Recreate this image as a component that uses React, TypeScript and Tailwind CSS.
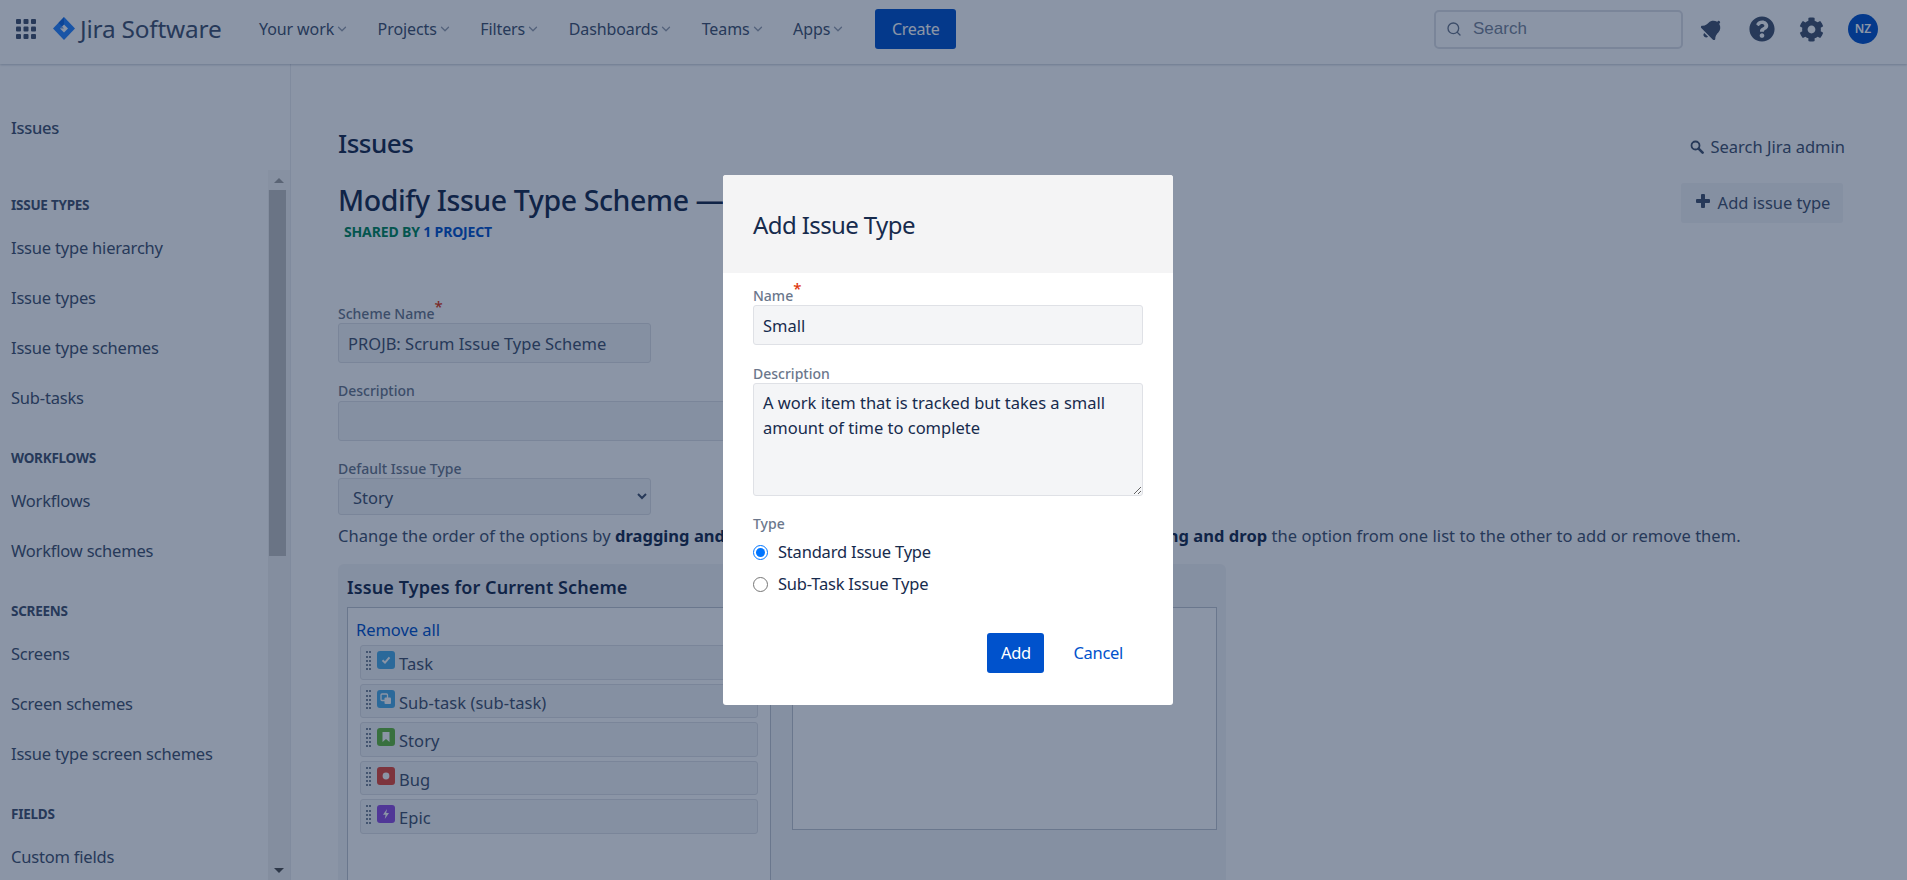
import React from 'react';
import { ChevronDown, Search } from 'lucide-react';
import { FaBell, FaCog, FaQuestionCircle } from 'react-icons/fa';

const navItems = ['Your work', 'Projects', 'Filters', 'Dashboards', 'Teams', 'Apps'];

const sideGroups = [
    { title: 'ISSUE TYPES', items: ['Issue type hierarchy', 'Issue types', 'Issue type schemes', 'Sub-tasks'] },
    { title: 'WORKFLOWS', items: ['Workflows', 'Workflow schemes'] },
    { title: 'SCREENS', items: ['Screens', 'Screen schemes', 'Issue type screen schemes'] },
    { title: 'FIELDS', items: ['Custom fields'] },
];

const GridIcon = () => (
    <svg width="20" height="20" viewBox="0 0 20 20" fill="#42526e">
        <rect x="0" y="0" width="5" height="5" rx="1" />
        <rect x="7.5" y="0" width="5" height="5" rx="1" />
        <rect x="15" y="0" width="5" height="5" rx="1" />
        <rect x="0" y="7.5" width="5" height="5" rx="1" />
        <rect x="7.5" y="7.5" width="5" height="5" rx="1" />
        <rect x="15" y="7.5" width="5" height="5" rx="1" />
        <rect x="0" y="15" width="5" height="5" rx="1" />
        <rect x="7.5" y="15" width="5" height="5" rx="1" />
        <rect x="15" y="15" width="5" height="5" rx="1" />
    </svg>
);

const JiraLogo = () => (
    <svg width="24" height="24" viewBox="0 0 24 24">
        <path d="M12 0 L23 11.5 L12 23 L1 11.5 Z" fill="#2684ff" />
        <path d="M12 7.6 L16 11.5 L12 15.4 L8 11.5 Z" fill="#ffffff" />
        <path d="M12 0 L6.5 5.8 L12 11.5 L8 11.5 L12 7.6 Z" fill="#0052cc" opacity="0.55" />
    </svg>
);

const AdminSearch = () => (
    <svg width="14" height="14" viewBox="0 0 14 14" fill="none" stroke="#42526e">
        <circle cx="5.5" cy="5.5" r="4" strokeWidth="1.8" />
        <path d="M8.6 8.6 L12.6 12.6" strokeWidth="2.6" strokeLinecap="round" />
    </svg>
);

const PlusIcon = () => (
    <svg width="14" height="14" viewBox="0 0 14 14" fill="#42526e">
        <rect x="5" y="0" width="4" height="14" rx="1" />
        <rect x="0" y="5" width="14" height="4" rx="1" />
    </svg>
);

const TypeIcon = ({ kind }: { kind: string }) => {
    const bg: Record<string, string> = {
        task: 'bg-[#4bade8]',
        sub: 'bg-[#4bade8]',
        story: 'bg-[#63ba3c]',
        bug: 'bg-[#e5493a]',
        epic: 'bg-[#904ee2]',
    };
    return (
        <span className={`flex h-[18px] w-[18px] items-center justify-center rounded-[3px] ${bg[kind]}`}>
            <svg width="12" height="12" viewBox="0 0 12 12">
                {kind === 'task' && <path d="M2.5 6.2 L5 8.6 L9.5 3.4" fill="none" stroke="#fff" strokeWidth="2" />}
                {kind === 'sub' && (
                    <>
                        <rect x="1" y="1" width="6.5" height="6.5" rx="1" fill="none" stroke="#fff" strokeWidth="1.3" />
                        <rect x="4.5" y="4.5" width="6.5" height="6.5" rx="1" fill="#fff" />
                    </>
                )}
                {kind === 'story' && <path d="M2.5 1 H9.5 V11 L6 8 L2.5 11 Z" fill="#fff" />}
                {kind === 'bug' && <circle cx="6" cy="6" r="3.4" fill="#fff" />}
                {kind === 'epic' && <path d="M7 1 L3 6.8 H5.6 L4.8 11 L9 5 H6.2 Z" fill="#fff" />}
            </svg>
        </span>
    );
};

const issueTypes = [
    { kind: 'task', name: 'Task' },
    { kind: 'sub', name: 'Sub-task (sub-task)' },
    { kind: 'story', name: 'Story' },
    { kind: 'bug', name: 'Bug' },
    { kind: 'epic', name: 'Epic' },
];

const App = () => {
    return (
        <div className="relative h-[880px] w-[1907px] overflow-hidden bg-white text-[16px] text-[#172b4d] font-['Noto_Sans',sans-serif]">
            {/* top bar */}
            <header className="relative flex h-[64px] items-center bg-white pb-[6px] pl-[16px] pr-[29px] shadow-[0_1px_2px_rgba(9,30,66,0.22)]">
                <GridIcon />
                <span className="ml-[16px]"><JiraLogo /></span>
                <span className="ml-[4px] text-[24.4px] tracking-[-0.2px] text-[#42526e]">Jira Software</span>
                <nav className="ml-[9px] flex items-center">
                    {navItems.map((item) => (
                        <span key={item} className="ml-[28.5px] flex items-center text-[16px] tracking-[-0.1px] text-[#42526e]">
                            {item}
                            <ChevronDown size={14} strokeWidth={2.2} className="ml-[1px] text-[#97a0af]" />
                        </span>
                    ))}
                </nav>
                <button className="ml-[30px] h-[40px] w-[81px] rounded-[3px] bg-[#0052cc] text-[16px] tracking-[-0.25px] text-white">Create</button>
                <div className="ml-auto flex items-center">
                    <div className="flex h-[39px] w-[249px] items-center rounded-[5px] border-2 border-[#dfe1e6] bg-white pl-[10px]">
                        <Search size={16} strokeWidth={2} className="text-[#6b778c]" />
                        <span className="ml-[11px] font-['Liberation_Sans',sans-serif] text-[17px] text-[#7a869a]">Search</span>
                    </div>
                    <FaBell size={22} className="ml-[18px] rotate-45 text-[#42526e]" />
                    <FaQuestionCircle size={26} className="ml-[26px] text-[#42526e]" />
                    <FaCog size={25} className="ml-[24px] text-[#42526e]" />
                    <span className="ml-[24px] flex h-[30px] w-[30px] items-center justify-center rounded-full bg-[#0052cc] text-[12px] font-semibold text-white">NZ</span>
                </div>
            </header>

            <div className="flex h-[816px]">
                {/* sidebar */}
                <aside className="flex w-[291px] shrink-0 flex-col border-r border-[#ebecf0]">
                    <div className="mt-[52px] pl-[11px] text-[16.5px] font-medium tracking-[-0.3px] leading-[24px] text-[#42526e]">Issues</div>
                    <div className="mt-[30px] flex min-h-0 flex-1">
                        <div className="w-[268px] overflow-hidden pl-[11px] pt-[25px]">
                            {sideGroups.map((group) => (
                                <div key={group.title} className="mb-[38px]">
                                    <div className="text-[13.5px] font-bold tracking-[-0.25px] leading-[20px] text-[#42526e]">{group.title}</div>
                                    <div className="mt-[20px] flex flex-col gap-[25px]">
                                        {group.items.map((item) => (
                                            <div key={item} className="text-[16.5px] tracking-[-0.2px] leading-[25px] text-[#42526e]">{item}</div>
                                        ))}
                                    </div>
                                </div>
                            ))}
                        </div>
                        <div className="flex w-[22px] flex-col bg-[#f1f1f1]">
                            <div className="flex h-[20px] items-center justify-center bg-[#f7f7f7]">
                                <span className="h-0 w-0 border-x-[5px] border-b-[5px] border-x-transparent border-b-[#a3a3a3]"></span>
                            </div>
                            <div className="ml-[1px] mr-[4px] h-[366px] bg-[#c1c1c1]"></div>
                            <div className="mt-auto flex h-[20px] items-center justify-center">
                                <span className="h-0 w-0 border-x-[5px] border-t-[5px] border-x-transparent border-t-[#505050]"></span>
                            </div>
                        </div>
                    </div>
                </aside>

                {/* main column */}
                <main className="min-w-0 flex-1 pl-[47px] pr-[62px] pt-[63px]">
                    <div className="flex h-[32px] justify-between">
                        <h1 className="text-[26px] font-medium tracking-[-0.5px] leading-[32px]">Issues</h1>
                        <div className="mt-[8px] flex h-[24px] items-center gap-[6px] text-[16.5px] tracking-[0px] text-[#42526e]">
                            <AdminSearch />
                            Search Jira admin
                        </div>
                    </div>
                    <div className="mt-[22px] flex h-[38px] justify-between">
                        <h2 className="whitespace-nowrap text-[28.5px] font-medium tracking-[-0.4px] leading-[38px]">Modify Issue Type Scheme — PROJB: Scrum Issue Type Scheme</h2>
                        <button className="mr-[2px] mt-[2px] flex h-[40px] w-[162px] shrink-0 items-center justify-center gap-[8px] rounded-[3px] bg-[#f4f5f7] pl-[2px] text-[16.5px] tracking-[0px] text-[#42526e]">
                            <span className="-mt-[5px]"><PlusIcon /></span>
                            Add issue type
                        </button>
                    </div>
                    <div className="ml-[6px] mt-[5px] text-[14px] font-bold tracking-[-0.15px] leading-[16px] text-[#00875a]">
                        SHARED BY <span className="text-[#0052cc]">1 PROJECT</span>
                    </div>

                    <label className="mt-[65px] block h-[17px] text-[14px] font-medium leading-[18px] text-[#6b778c]">
                        Scheme Name<sup className="text-[15px] text-[#de350b]">*</sup>
                    </label>
                    <input readOnly value="PROJB: Scrum Issue Type Scheme" className="mt-[1px] block h-[40px] w-[313px] rounded-[3px] border border-[#dfe1e6] bg-[#f4f5f7] px-[9px] text-[16.5px] text-[#42526e]" />

                    <label className="mt-[19px] block h-[18px] text-[14px] font-medium leading-[18px] text-[#6b778c]">Description</label>
                    <div className="mt-[1px] h-[40px] w-[800px] rounded-[3px] border border-[#dfe1e6] bg-[#f4f5f7]"></div>

                    <label className="mt-[19px] block h-[17px] text-[14px] font-medium leading-[18px] text-[#6b778c]">Default Issue Type</label>
                    <select defaultValue="Story" className="mt-[1px] block h-[37px] w-[313px] rounded-[3px] border border-[#dfe1e6] bg-[#f4f5f7] pl-[10px] pr-[8px] pt-[2px] text-[16.5px] text-[#42526e]">
                        <option>Story</option>
                    </select>

                    <p className="mt-[9px] whitespace-nowrap text-[16.5px] tracking-[0.04px] leading-[24px] text-[#42526e]">
                        Change the order of the options by <strong className="text-[#172b4d]">dragging and dropping</strong> the option into desired order. Similarly, <strong className="text-[#172b4d]">dragging and drop</strong> the option from one list to the other to add or remove them.
                    </p>

                    {/* scheme panel */}
                    <div className="mt-[16px] h-[400px] w-[888px] rounded-[6px] bg-[#f4f5f7] px-[9px] pt-[11px]">
                        <div className="text-[18px] font-semibold tracking-[0.1px] leading-[24px]">Issue Types for Current Scheme</div>
                        <div className="mt-[8px] flex items-start gap-[21px]">
                            <div className="h-[300px] w-[424px] border border-[#c1c7d0] bg-white pl-[8px] pr-[12px] pt-[10px]">
                                <div className="text-[16.5px] tracking-[-0.05px] leading-[24px] text-[#0052cc]">Remove all</div>
                                <ul className="ml-[4px] mt-[3px] flex flex-col gap-[4px]">
                                    {issueTypes.map((t) => (
                                        <li key={t.name} className="flex h-[34.5px] items-start rounded-[3px] border border-[#dfe1e6] bg-[#f4f5f7] pl-[5px] pt-[5px]">
                                            <span className="mr-[6px] h-[19px] w-[5px] border-x-2 border-dotted border-[#7a869a]"></span>
                                            <TypeIcon kind={t.kind} />
                                            <span className="ml-[4px] mt-[1px] text-[16.5px] tracking-[0.05px] leading-[24px] text-[#42526e]">{t.name}</span>
                                        </li>
                                    ))}
                                </ul>
                            </div>
                            <div className="h-[223px] w-[425px] border border-[#c1c7d0] bg-white"></div>
                        </div>
                    </div>
                </main>
            </div>

            {/* dim layer and dialog */}
            <div className="absolute inset-0 bg-[#091e42]/[0.47]"></div>
            <div className="absolute left-[723px] top-[175px] h-[530px] w-[450px] overflow-hidden rounded-[3px] bg-white">
                <div className="flex h-[98px] items-center bg-[#f4f4f5] pl-[30px]">
                    <h3 className="mt-[2px] text-[24px] tracking-[-0.6px] text-[#172b4d]">Add Issue Type</h3>
                </div>
                <div className="px-[30px] pt-[14px]">
                    <label className="block h-[17px] text-[14px] font-medium leading-[18px] text-[#6b778c]">
                        Name<sup className="text-[15px] text-[#de350b]">*</sup>
                    </label>
                    <input readOnly value="Small" className="mt-[1px] block h-[40px] w-full rounded-[3px] border border-[#dfe1e6] bg-[#f4f5f7] px-[9px] text-[16.5px] text-[#172b4d]" />
                    <label className="mt-[20px] block h-[18px] text-[14px] font-medium leading-[18px] text-[#6b778c]">Description</label>
                    <textarea readOnly defaultValue="A work item that is tracked but takes a small amount of time to complete" className="block h-[113px] w-full rounded-[3px] border border-[#dfe1e6] bg-[#f4f5f7] px-[9px] py-[6px] text-[16.5px] leading-[25px] text-[#172b4d]"></textarea>
                    <label className="mt-[19px] block h-[18px] text-[14px] font-medium leading-[18px] text-[#6b778c]">Type</label>
                    <div className="mt-[7px] flex h-[24px] items-center gap-[10px] text-[16.5px] tracking-[-0.2px]">
                        <input type="radio" name="issue-kind" readOnly checked className="m-0 h-[15px] w-[15px]" />
                        Standard Issue Type
                    </div>
                    <div className="mt-[8px] flex h-[24px] items-center gap-[10px] text-[16.5px] tracking-[-0.2px]">
                        <input type="radio" name="issue-kind" readOnly checked={false} className="m-0 h-[15px] w-[15px]" />
                        Sub-Task Issue Type
                    </div>
                    <div className="mt-[37px] flex items-center justify-end">
                        <button className="h-[40px] w-[57px] rounded-[3px] bg-[#0052cc] text-[16.5px] tracking-[-0.3px] text-white">Add</button>
                        <span className="ml-[29px] mr-[20px] text-[16.5px] tracking-[-0.3px] text-[#0052cc]">Cancel</span>
                    </div>
                </div>
            </div>
        </div>
    );
};

export default App;
